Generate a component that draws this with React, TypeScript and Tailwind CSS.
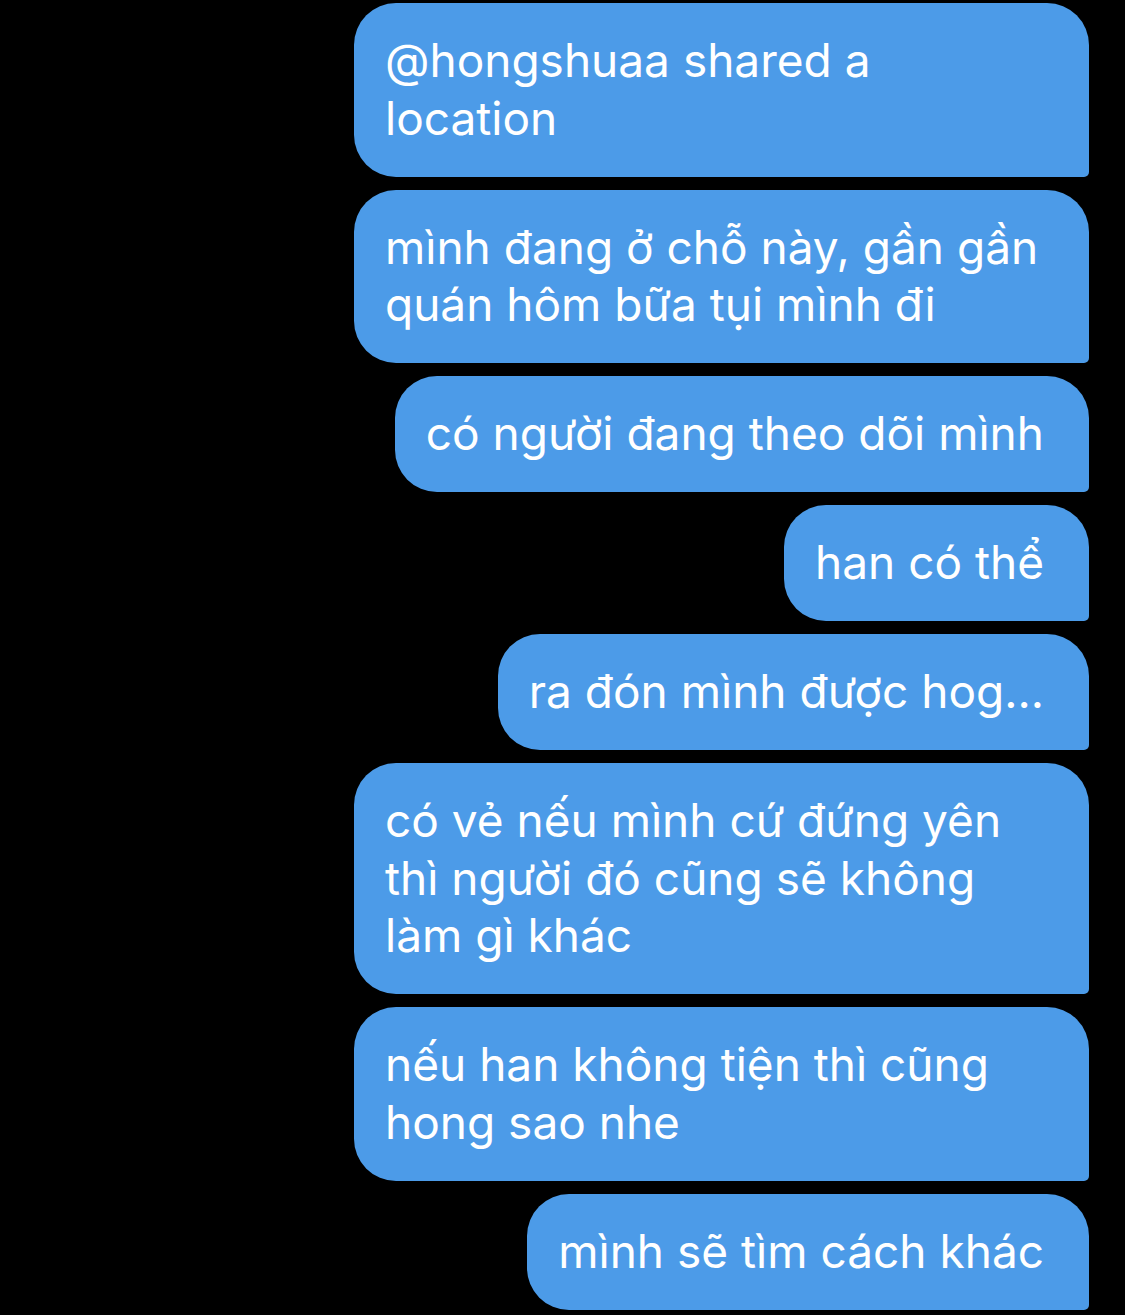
import React from "react";

const messages = [
  "@hongshuaa shared a location",
  "mình đang ở chỗ này, gần gần quán hôm bữa tụi mình đi",
  "có người đang theo dõi mình",
  "han có thể",
  "ra đón mình được hog...",
  "có vẻ nếu mình cứ đứng yên thì người đó cũng sẽ không làm gì khác",
  "nếu han không tiện thì cũng hong sao nhe",
  "mình sẽ tìm cách khác",
];

const Bubble = ({ text }: { text: string }) => (
  <div className="max-w-[735px] rounded-[42px] rounded-br-[5px] bg-[#4c9be8] pl-[31px] pr-[45px] py-[29.25px] text-[46px] leading-[57.5px] text-white">
    {text}
  </div>
);

export default function App() {
  return (
    <div
      className="w-[1125px] h-[1315px] bg-black flex flex-col items-end gap-[13px] pt-[3px] pr-[36px] overflow-hidden"
      style={{ fontFamily: "Inter, 'Noto Sans', sans-serif" }}
    >
      {messages.map((m, i) => (
        <Bubble key={i} text={m} />
      ))}
    </div>
  );
}
